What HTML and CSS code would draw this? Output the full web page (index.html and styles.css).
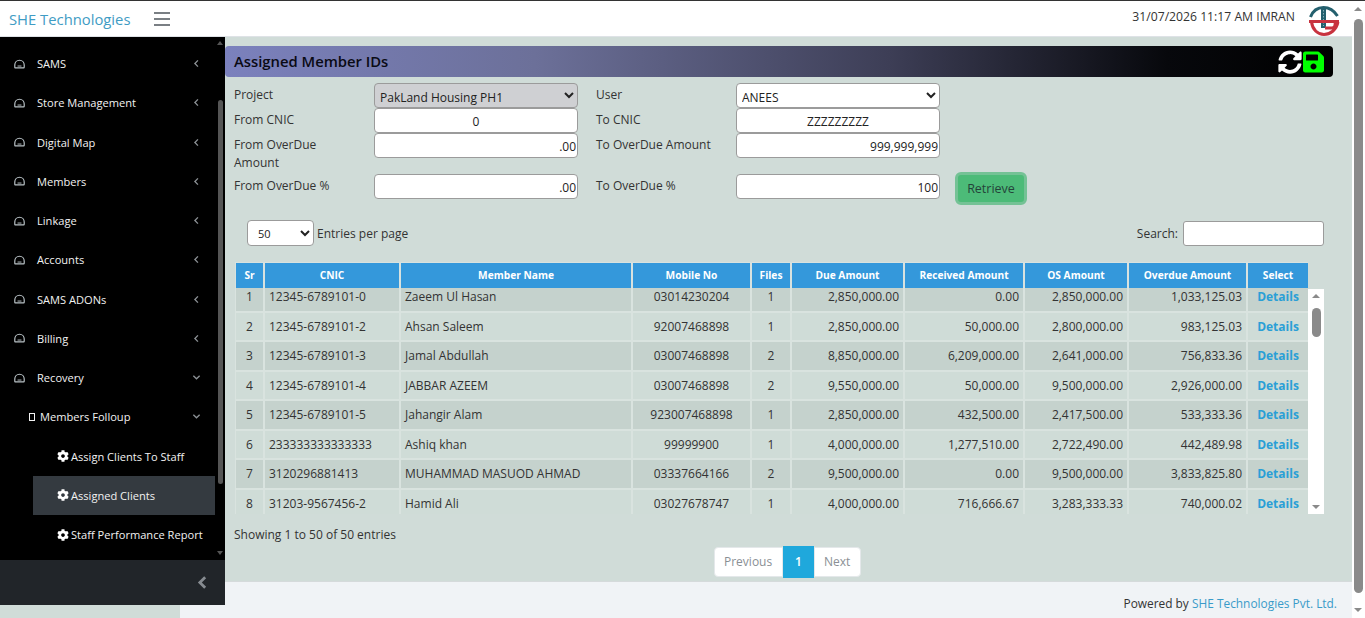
FILE: index.html
```html
<!DOCTYPE html>
<html lang="en">
<head>
    <meta charset="UTF-8">
    <title>Assigned Member IDs</title>
    <link rel="stylesheet" href="styles.css">
</head>
<body>
<svg class="defs" width="0" height="0">
    <symbol id="dome" viewBox="0 0 14 12"><path d="M1 10.2V7.4C1 4 3.6 1.2 7 1.2s6 2.8 6 6.2v2.8c0 .5-.3.8-.8.8H1.8c-.5 0-.8-.3-.8-.8z" fill="none" stroke="currentColor" stroke-width="1.5"/><path d="M4.5 8.6h5" stroke="currentColor" stroke-width="1.2"/></symbol>
    <symbol id="left" viewBox="0 0 8 10"><path d="M5.6 1.5L2.2 5l3.4 3.5" fill="none" stroke="currentColor" stroke-width="1.5"/></symbol>
    <symbol id="down" viewBox="0 0 10 8"><path d="M1.5 2l3.5 3.4L8.500 2" fill="none" stroke="currentColor" stroke-width="1.5"/></symbol>
    <symbol id="cog" viewBox="0 0 512 512"><path d="M487.4 315.7l-42.6-24.6c4.3-23.2 4.3-47 0-70.2l42.6-24.6c4.9-2.8 7.1-8.6 5.5-14-11.1-35.6-30-67.8-54.7-94.6-3.8-4.1-10-5.1-14.8-2.3L380.8 110c-17.9-15.4-38.5-27.3-60.8-35.1V25.8c0-5.6-3.9-10.5-9.4-11.7-36.7-8.2-74.3-7.8-109.2 0-5.5 1.2-9.4 6.1-9.4 11.7V75c-22.2 7.9-42.8 19.8-60.8 35.1L88.7 85.5c-4.9-2.8-11-1.9-14.8 2.3-24.7 26.7-43.6 58.9-54.7 94.6-1.7 5.4.6 11.2 5.5 14L67.3 221c-4.3 23.2-4.3 47 0 70.2l-42.6 24.6c-4.9 2.8-7.1 8.6-5.5 14 11.1 35.6 30 67.8 54.7 94.6 3.8 4.1 10 5.1 14.8 2.3l42.6-24.6c17.9 15.4 38.5 27.3 60.8 35.1v49.2c0 5.6 3.9 10.5 9.4 11.7 36.7 8.2 74.3 7.8 109.2 0 5.5-1.2 9.4-6.1 9.4-11.7v-49.2c22.2-7.9 42.8-19.8 60.8-35.1l42.6 24.6c4.9 2.8 11 1.9 14.8-2.3 24.7-26.7 43.6-58.9 54.7-94.6 1.5-5.5-.7-11.3-5.6-14.1zM256 336c-44.1 0-80-35.9-80-80s35.9-80 80-80 80 35.900 80 80-35.9 80-80 80z" fill="currentColor"/></symbol>
</svg>

<div class="page">
    <div class="window">
        <!-- top bar -->
        <header class="topbar">
            <a class="brand">SHE Technologies</a>
            <div class="burger"><span></span><span></span><span></span></div>
            <div class="stamp">31/07/2026 11:17 AM IMRAN</div>
            <svg class="logo" width="32" height="34" viewBox="0 0 32 34">
                <path d="M2.500 15C5 8.500 10 5.500 15.500 5.500S26 8.500 29.500 14" fill="none" stroke="#24606e" stroke-width="3"/>
                <rect x="13" y="5" width="5" height="21" fill="#24606e"/>
                <path d="M15.500 8v16" stroke="#9fc4cc" stroke-width=".8" stroke-dasharray="1.500 1.500"/>
                <path d="M1 19.500H31M3.500 20C4.500 28 10 32.500 16 32.500S28.500 28 30 20M17 26h7c2 0 3.200-2 3.200-5" fill="none" stroke="#c8333f" stroke-width="3"/>
            </svg>
        </header>

        <div class="shell">
            <!-- left menu -->
            <aside class="sidebar">
                <nav class="menu">
                    <a class="item"><svg class="dome"><use href="#dome"/></svg>SAMS<svg class="caret"><use href="#left"/></svg></a>
                    <a class="item"><svg class="dome"><use href="#dome"/></svg>Store Management<svg class="caret"><use href="#left"/></svg></a>
                    <a class="item"><svg class="dome"><use href="#dome"/></svg>Digital Map<svg class="caret"><use href="#left"/></svg></a>
                    <a class="item"><svg class="dome"><use href="#dome"/></svg>Members<svg class="caret"><use href="#left"/></svg></a>
                    <a class="item"><svg class="dome"><use href="#dome"/></svg>Linkage<svg class="caret"><use href="#left"/></svg></a>
                    <a class="item"><svg class="dome"><use href="#dome"/></svg>Accounts<svg class="caret"><use href="#left"/></svg></a>
                    <a class="item"><svg class="dome"><use href="#dome"/></svg>SAMS ADONs<svg class="caret"><use href="#left"/></svg></a>
                    <a class="item"><svg class="dome"><use href="#dome"/></svg>Billing<svg class="caret"><use href="#left"/></svg></a>
                    <a class="item"><svg class="dome"><use href="#dome"/></svg>Recovery<svg class="caret"><use href="#down"/></svg></a>
                    <a class="item sub"><span class="box"></span>Members Folloup<svg class="caret"><use href="#down"/></svg></a>
                    <a class="item leaf"><svg class="cog"><use href="#cog"/></svg>Assign Clients To Staff</a>
                    <a class="item leaf active"><svg class="cog"><use href="#cog"/></svg>Assigned Clients</a>
                    <a class="item leaf"><svg class="cog"><use href="#cog"/></svg>Staff Performance Report</a>
                    <div class="menu-scroll"><i class="arrow-up"></i><b></b><i class="arrow-down"></i></div>
                </nav>
                <div class="side-foot"><svg class="side-back" viewBox="0 0 10 14"><path d="M7.500 2L2.500 7l5 5" fill="none" stroke="currentColor" stroke-width="2.600"/></svg></div>
            </aside>

            <div class="right">
                <main class="main">
                    <div class="titlebar">
                        <h1>Assigned Member IDs</h1>
                        <svg class="tool sync" width="24" height="24" viewBox="0 0 512 512"><path fill="#fff" d="M370.72 133.28C339.458 104.008 298.888 87.962 255.848 88c-77.458.068-144.328 53.178-162.791 126.85-1.344 5.363-6.122 9.15-11.651 9.15H24.103c-7.498 0-13.194-6.807-11.807-14.176C33.933 94.924 134.813 8 256 8c66.448 0 126.791 26.136 171.315 68.685L463.03 40.97C478.149 25.851 504 36.559 504 57.941V192c0 13.255-10.745 24-24 24H345.941c-21.382 0-32.09-25.851-16.971-40.971l41.75-41.749zM32 296h134.059c21.382 0 32.09 25.851 16.971 40.971l-41.75 41.75c31.262 29.273 71.835 45.319 114.876 45.28 77.418-.07 144.315-53.144 162.787-126.849 1.344-5.363 6.122-9.15 11.651-9.15h57.304c7.498 0 13.194 6.807 11.807 14.176C478.067 417.076 377.187 504 256 504c-66.448 0-126.791-26.136-171.315-68.685L48.97 471.03C33.851 486.149 8 475.441 8 454.059V320c0-13.255 10.745-24 24-24z"/></svg>
                        <svg class="tool" width="21" height="24" viewBox="0 0 448 512"><path fill="#00ff00" d="M433.941 129.941l-83.882-83.882A48 48 0 0 0 316.118 32H48C21.49 32 0 53.49 0 80v352c0 26.51 21.49 48 48 48h352c26.51 0 48-21.49 48-48V163.882a48 48 0 0 0-14.059-33.941zM224 416c-35.346 0-64-28.654-64-64 0-35.346 28.654-64 64-64s64 28.654 64 64c0 35.346-28.654 64-64 64zm96-304.52V212c0 6.627-5.373 12-12 12H76c-6.627 0-12-5.373-12-12V108c0-6.627 5.373-12 12-12h228.52c3.183 0 6.235 1.264 8.485 3.515l3.48 3.48A11.996 11.996 0 0 1 320 111.48z"/></svg>
                    </div>

                    <!-- filters -->
                    <div class="filters">
                        <label>Project</label>
                        <select class="field locked"><option>PakLand Housing PH1</option></select>
                        <label>User</label>
                        <select class="field"><option>ANEES</option></select>
                        <span></span>

                        <label>From CNIC</label>
                        <input class="field mid" value="0">
                        <label>To CNIC</label>
                        <input class="field mid" value="ZZZZZZZZZ">
                        <span></span>

                        <label class="narrow">From OverDue Amount</label>
                        <input class="field num" value=".00">
                        <label>To OverDue Amount</label>
                        <input class="field num" value="999,999,999">
                        <span></span>

                        <label>From OverDue %</label>
                        <input class="field num" value=".00">
                        <label>To OverDue %</label>
                        <input class="field num" value="100">
                        <button class="retrieve">Retrieve</button>
                    </div>

                    <div class="tools">
                        <select class="per-page"><option>50</option></select>
                        <span>Entries per page</span>
                        <span class="search-label">Search:</span>
                        <input class="search">
                    </div>

                    <table class="grid head">
                        <colgroup><col class="c1"><col class="c2"><col class="c3"><col class="c4"><col class="c5"><col class="c6"><col class="c7"><col class="c8"><col class="c9"><col class="c10"></colgroup>
                        <tr><th>Sr</th><th>CNIC</th><th>Member Name</th><th>Mobile No</th><th>Files</th><th>Due Amount</th><th>Received Amount</th><th>OS Amount</th><th>Overdue Amount</th><th>Select</th></tr>
                    </table>
                    <div class="table-body">
                        <div class="rows">
                            <table class="grid">
                                <colgroup><col class="c1"><col class="c2"><col class="c3"><col class="c4"><col class="c5"><col class="c6"><col class="c7"><col class="c8"><col class="c9"><col class="c10"></colgroup>
                                <tr><td class="ctr">1</td><td>12345-6789101-0</td><td>Zaeem Ul Hasan</td><td class="ctr">03014230204</td><td class="ctr">1</td><td class="rgt">2,850,000.00</td><td class="rgt">0.00</td><td class="rgt">2,850,000.00</td><td class="rgt">1,033,125.03</td><td class="ctr"><a class="details">Details</a></td></tr>
                                <tr><td class="ctr">2</td><td>12345-6789101-2</td><td>Ahsan Saleem</td><td class="ctr">92007468898</td><td class="ctr">1</td><td class="rgt">2,850,000.00</td><td class="rgt">50,000.00</td><td class="rgt">2,800,000.00</td><td class="rgt">983,125.03</td><td class="ctr"><a class="details">Details</a></td></tr>
                                <tr><td class="ctr">3</td><td>12345-6789101-3</td><td>Jamal Abdullah</td><td class="ctr">03007468898</td><td class="ctr">2</td><td class="rgt">8,850,000.00</td><td class="rgt">6,209,000.00</td><td class="rgt">2,641,000.00</td><td class="rgt">756,833.36</td><td class="ctr"><a class="details">Details</a></td></tr>
                                <tr><td class="ctr">4</td><td>12345-6789101-4</td><td>JABBAR AZEEM</td><td class="ctr">03007468898</td><td class="ctr">2</td><td class="rgt">9,550,000.00</td><td class="rgt">50,000.00</td><td class="rgt">9,500,000.00</td><td class="rgt">2,926,000.00</td><td class="ctr"><a class="details">Details</a></td></tr>
                                <tr><td class="ctr">5</td><td>12345-6789101-5</td><td>Jahangir Alam</td><td class="ctr">923007468898</td><td class="ctr">1</td><td class="rgt">2,850,000.00</td><td class="rgt">432,500.00</td><td class="rgt">2,417,500.00</td><td class="rgt">533,333.36</td><td class="ctr"><a class="details">Details</a></td></tr>
                                <tr><td class="ctr">6</td><td>233333333333333</td><td>Ashiq khan</td><td class="ctr">99999900</td><td class="ctr">1</td><td class="rgt">4,000,000.00</td><td class="rgt">1,277,510.00</td><td class="rgt">2,722,490.00</td><td class="rgt">442,489.98</td><td class="ctr"><a class="details">Details</a></td></tr>
                                <tr><td class="ctr">7</td><td>3120296881413</td><td>MUHAMMAD MASUOD AHMAD</td><td class="ctr">03337664166</td><td class="ctr">2</td><td class="rgt">9,500,000.00</td><td class="rgt">0.00</td><td class="rgt">9,500,000.00</td><td class="rgt">3,833,825.80</td><td class="ctr"><a class="details">Details</a></td></tr>
                                <tr><td class="ctr">8</td><td>31203-9567456-2</td><td>Hamid Ali</td><td class="ctr">03027678747</td><td class="ctr">1</td><td class="rgt">4,000,000.00</td><td class="rgt">716,666.67</td><td class="rgt">3,283,333.33</td><td class="rgt">740,000.02</td><td class="ctr"><a class="details">Details</a></td></tr>
                            </table>
                        </div>
                        <div class="table-scroll"><i class="arrow-up"></i><b></b><i class="arrow-down"></i></div>
                    </div>

                    <div class="showing">Showing 1 to 50 of 50 entries</div>
                    <div class="pager"><a>Previous</a><a class="on">1</a><a>Next</a></div>
                </main>
                <footer class="footer">Powered by&nbsp;<a>SHE Technologies Pvt. Ltd.</a></footer>
            </div>
        </div>
    </div>
    <div class="page-scroll"><i class="arrow-up"></i><b></b><i class="arrow-down"></i></div>
</div>
</body>
</html>
```

FILE: styles.css
```css
* { box-sizing: border-box; }

html, body { margin: 0; height: 618px; overflow: hidden; }

body
{
    font-family: "Open Sans", "Liberation Sans", sans-serif;
    font-size: 12px; color: #333; background-color: #fff;
}

.defs { position: absolute; }

.page { display: flex; height: 618px; border-top: 1px solid #333; }
.window { width: 1352px; display: flex; flex-direction: column; }

/* top bar */
.topbar
{
    height: 36px; display: flex; align-items: center; background-color: #fff;
    border-bottom: 1px solid #dee2e6; padding-left: 9px;
}
.brand { font-size: 14.800px; color: #3f9cc4; width: 145px; }
.burger { width: 16px; display: flex; flex-direction: column; gap: 4px; }
.burger span { height: 2px; background-color: #7a7f84; }
.stamp { margin-left: auto; margin-right: 13px; margin-top: -4px; font-size: 12.200px; color: #333; }
.logo { margin-right: 12px; }

.shell
{
    flex: 1; display: flex; align-items: flex-start;
    background: linear-gradient(to right, #d0dcd8 180px, #f0f3f6 180px);
}

/* sidebar */
.sidebar { width: 225px; height: 568px; background-color: #000; display: flex; flex-direction: column; }
.menu { height: 523px; padding-top: 7px; position: relative; overflow: hidden; }
.item
{
    height: 39.250px; display: flex; align-items: center; color: #f2f2f2;
    font-size: 11.100px; padding-left: 14px; width: 215px;
}
.dome { width: 11px; height: 10px; margin-right: 12px; color: #b9c2c6; }
.caret { width: 9px; height: 9px; margin-left: auto; margin-right: 14px; color: #8b9094; }
.sub { padding-left: 29px; }
.box { width: 6px; height: 8px; border: 1.300px solid #f2f2f2; margin-right: 5px; }
.leaf { margin-left: 33px; width: 182px; padding-left: 24px; white-space: nowrap; }
.cog { width: 12px; height: 12px; margin-right: 2px; color: #fff; flex: none; }
.active { background-color: #343a40; }

.menu-scroll { position: absolute; right: 0; top: 0; width: 9px; height: 100%; }
.menu-scroll b { position: absolute; left: 1.500px; width: 5px; top: 63px; height: 384px; border-radius: 3px; background-color: #555; }
.menu-scroll .arrow-up { position: absolute; left: 1px; top: 4px; border: 3px solid transparent; border-top: 0; border-bottom: 4px solid #555; }
.menu-scroll .arrow-down { position: absolute; left: 1px; bottom: 5px; border: 3px solid transparent; border-bottom: 0; border-top: 4px solid #555; }

.side-foot { flex: 1; background-color: #212529; display: flex; align-items: center; justify-content: flex-end; padding-right: 17px; }
.side-back { width: 11px; height: 15px; color: #868b90; }

/* main part */
.right { flex: 1; min-width: 0; display: flex; flex-direction: column; }
.main { height: 544px; background-color: #d0dcd8; padding-top: 9px; }

.titlebar
{
    height: 31px; width: 1108px; border-radius: 4px; padding: 0 9px; display: flex; align-items: center;
    background: linear-gradient(to right, #7b81bd 0%, #6c7099 28%, #3d3e56 60%, #07080c 85%, #000 100%);
}
.titlebar h1 { margin: -2px auto 0 0; font-size: 14.800px; font-weight: 600; color: #0a0a14; }
.tool { flex: none; }
.sync { margin-right: 1px; }

.filters
{
    display: grid; grid-template-columns: 140px 222px 140px 221px 73px;
    grid-template-rows: 25px 25px 41px 25px;
    padding: 6px 0 0 9px; color: #333;
}
.filters label { line-height: 18px; padding-top: 3px; }
.filters .narrow { padding-right: 30px; }
.field
{
    height: 25px; width: 204px; border: 1px solid #9b9b9b; border-radius: 4px; padding-top: 3px;
    background-color: #fff; font: 12px "Open Sans", sans-serif; color: #222;
}
select.field { padding-left: 1px; }
.locked { background-color: #cfd0d3; }
.mid { text-align: center; }
.num { text-align: right; padding-right: 1px; }
.retrieve
{
    width: 72px; height: 33px; margin-left: -2px; margin-top: -2px; border: 3px solid #74c295; border-radius: 6px;
    background-color: #4cbb78; color: #24443a; font: 12.500px "Open Sans", sans-serif;
}

.tools { display: flex; align-items: center; height: 26px; margin-top: 21px; padding-left: 22px; width: 1099px; }
.per-page
{
    width: 67px; height: 26px; margin-right: 3px; border: 1px solid #9b9b9b; border-radius: 4px;
    background-color: #fff; font: 11px "Open Sans", sans-serif; padding-left: 6px; color: #222;
}
.search-label { margin-left: auto; margin-right: 5px; }
.search { width: 141px; height: 25px; border: 1px solid #9b9b9b; border-radius: 3px; background-color: #fff; }

/* table */
.grid { table-layout: fixed; width: 1073px; border-collapse: separate; border-spacing: 0; margin-left: 10px; }
.c1 { width: 30px; }
.c2 { width: 136px; }
.c3 { width: 232px; }
.c4 { width: 119px; }
.c5 { width: 40px; }
.c6 { width: 113px; }
.c7 { width: 120px; }
.c8 { width: 104px; }
.c9 { width: 119px; }
.c10 { width: 60px; }

.head { margin-top: 16px; }
.head th
{
    height: 26px; padding: 0 0 2px; background-color: #3498db; color: #fff; font-size: 10.200px; font-weight: 700;
    border-top: 1px solid #d8e2df; border-right: 2px solid #d8e2df; white-space: nowrap;
}
.head th:first-child { border-left: 1px solid #d8e2df; }
.head th:last-child { border-right: 0; }

.table-body { display: flex; height: 226px; width: 1099px; overflow: hidden; }
.rows { width: 1083px; height: 226px; overflow: hidden; }
.rows .grid { margin-top: -5px; }
.grid td
{
    height: 29.500px; padding: 0 4px; white-space: nowrap; border-right: 2px solid #d9e3df;
    border-bottom: 2px solid #d9e3df; background-color: #cfdcd7; color: #333;
}
.grid td:first-child { border-left: 1px solid #d9e3df; }
.grid td:last-child { border-right: 0; }
.grid tr:nth-child(odd) td { background-color: #c5d2cd; }
.ctr { text-align: center; }
.rgt { text-align: right; }
.details { font-weight: 700; font-size: 12px; color: #2a9fd6; }

.table-scroll { width: 16px; height: 225px; margin-top: 1px; background-color: #fff; position: relative; }
.table-scroll b { position: absolute; left: 4px; top: 19px; width: 9px; height: 29px; border-radius: 5px; background-color: #8a8a8a; }
.table-scroll .arrow-up { position: absolute; left: 4px; top: 5px; border: 4px solid transparent; border-top: 0; border-bottom: 4px solid #8a8a8a; }
.table-scroll .arrow-down { position: absolute; left: 4px; bottom: 5px; border: 4px solid transparent; border-bottom: 0; border-top: 4px solid #8a8a8a; }

.showing { margin: 11.500px 0 0 9px; line-height: 18px; }
.pager { display: flex; align-items: center; margin: 2px 0 0 489px; height: 32px; }
.pager a
{
    height: 30px; padding: 0 9px; display: flex; align-items: center; background-color: #fff;
    color: #8a8f94; border: 1px solid #e4e8ea;
}
.pager a:first-child { border-radius: 4px 0 0 4px; width: 69px; }
.pager a:last-child { border-radius: 0 4px 4px 0; width: 47px; }
.pager .on { height: 32px; width: 31px; justify-content: center; background-color: #1fa8dc; border: 0; color: #fff; font-weight: 600; }

.footer
{
    height: 37px; display: flex; align-items: center; justify-content: flex-end; font-size: 11.900px;
    padding: 5px 15px 0 0; border-top: 1px solid #d5dadb; background-color: #f0f3f6; color: #333;
}
.footer a { color: #3a9bc9; }

/* page scrollbar */
.page-scroll { width: 13px; background-color: #fff; position: relative; }
.page-scroll b { position: absolute; left: 2px; top: 18px; width: 9px; height: 574px; border-radius: 5px; background-color: #8a8a8a; }
.page-scroll .arrow-up { position: absolute; left: 2px; top: 6px; border: 4.500px solid transparent; border-top: 0; border-bottom: 4px solid #8a8a8a; }
.page-scroll .arrow-down { position: absolute; left: 2px; bottom: 6px; border: 4.500px solid transparent; border-bottom: 0; border-top: 4px solid #8a8a8a; }
```
